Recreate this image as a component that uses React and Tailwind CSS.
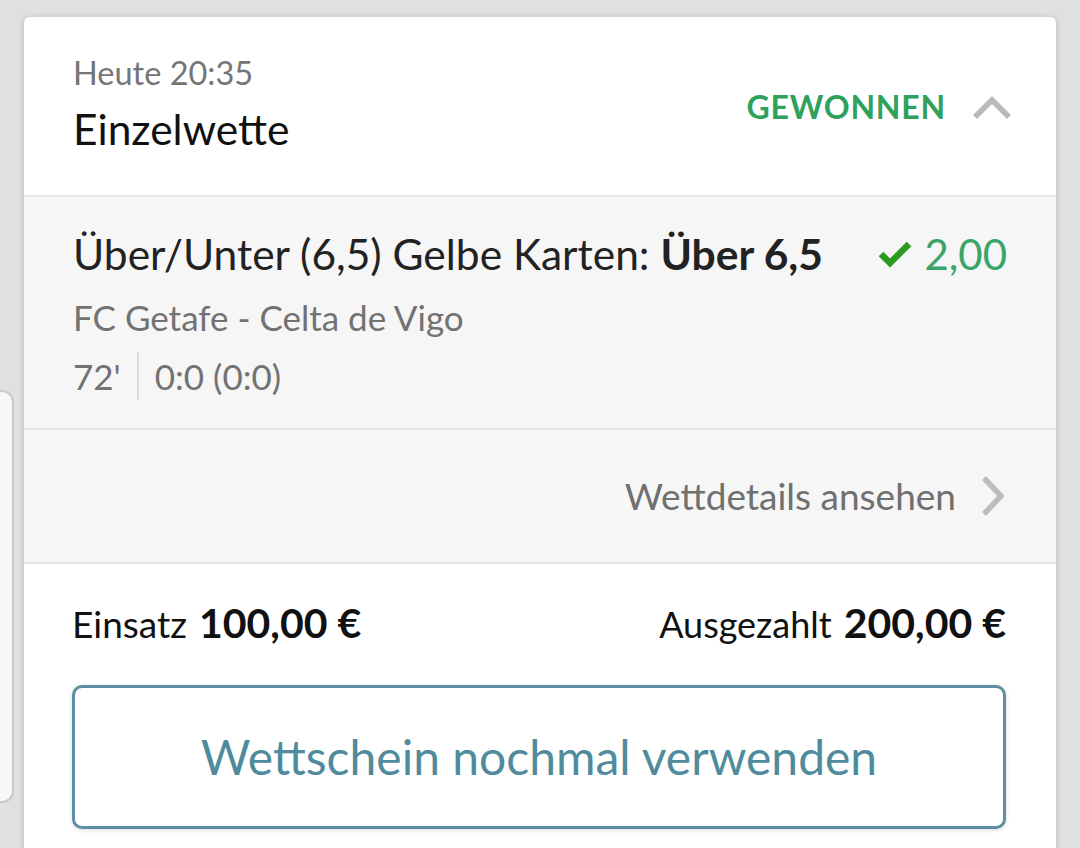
import React from "react";

const ChevronUp = () => (
  <svg width="40" height="26" viewBox="0 0 40 26" fill="none">
    <path d="M3 23 L20 6 L37 23" stroke="#b9b9b9" strokeWidth="5.5" />
  </svg>
);

const ChevronRight = () => (
  <svg width="26" height="42" viewBox="0 0 26 42" fill="none">
    <path d="M4 3 L21 21 L4 39" stroke="#bdbdbd" strokeWidth="5.5" />
  </svg>
);

const Check = () => (
  <svg width="34" height="28" viewBox="0 0 34 28" fill="none">
    <path d="M3 14 L12 23 L31 4" stroke="#2c9a1f" strokeWidth="6.5" />
  </svg>
);

const App = () => {
  return (
    <div
      className="h-[848px] w-[1080px] overflow-hidden bg-[#dfe0e2] flex items-start"
      style={{ fontFamily: "Lato, 'Noto Sans', sans-serif" }}
    >
      {/* peeking previous card */}
      <div className="mt-[390px] h-[413px] w-[14px] shrink-0 rounded-r-[12px] border-2 border-l-0 border-[#c9c9c9] bg-[#f7f7f7]"></div>

      <div className="ml-[10px] mt-[17px] w-[1032px] shrink-0 rounded-[6px] bg-white shadow-[0_1px_6px_rgba(0,0,0,0.18)]">
        {/* header */}
        <div className="flex items-center justify-between border-b-2 border-[#e8e8e8] pl-[49px] pr-[44px] pt-[36px] pb-[40px]">
          <div>
            <div className="text-[32.5px] leading-[40px] text-[#757575]">Heute 20:35</div>
            <div className="mt-[10px] text-[42.5px] leading-[52px] text-[#111]">Einzelwette</div>
          </div>
          <div className="flex items-center gap-[26px] pt-[6px]">
            <span className="text-[32px] font-bold tracking-[0.025em] text-[#2ea25d]">GEWONNEN</span>
            <ChevronUp />
          </div>
        </div>

        {/* selection */}
        <div className="border-b-2 border-[#e6e6e6] bg-[#f6f6f6] pl-[49px] pr-[49px] pt-[31px] pb-[28px]">
          <div className="flex items-center justify-between">
            <div className="text-[42.5px] leading-[52px] text-[#222]">
              Über/Unter (6,5) Gelbe Karten: <span className="font-bold">Über 6,5</span>
            </div>
            <div className="flex items-center gap-[12px]">
              <Check />
              <span className="text-[42px] leading-[52px] text-[#3ba468]">2,00</span>
            </div>
          </div>
          <div className="mt-[15px] text-[35px] leading-[44px] text-[#727272]">FC Getafe - Celta de Vigo</div>
          <div className="mt-[13px] flex items-center text-[35px] leading-[44px] text-[#727272]">
            <span>72'</span>
            <div className="mx-[16px] h-[48px] w-[2px] bg-[#dcdcdc]"></div>
            <span>0:0 (0:0)</span>
          </div>
        </div>

        {/* details link */}
        <div className="flex h-[134px] items-center justify-end gap-[24px] border-b-2 border-[#e6e6e6] bg-[#f6f6f6] pr-[50px]">
          <span className="text-[37px] text-[#707070]">Wettdetails ansehen</span>
          <ChevronRight />
        </div>

        {/* footer */}
        <div className="pl-[48px] pr-[50px] pt-[32px] pb-[40px]">
          <div className="flex items-baseline justify-between">
            <div className="flex items-baseline gap-[12px]">
              <span className="text-[37px] text-[#111]">Einsatz</span>
              <span className="text-[41px] leading-[52px] font-bold text-[#111]">100,00 €</span>
            </div>
            <div className="flex items-baseline gap-[12px]">
              <span className="text-[36px] text-[#111]">Ausgezahlt</span>
              <span className="text-[41px] leading-[52px] font-bold text-[#111]">200,00 €</span>
            </div>
          </div>
          <button className="mt-[33px] flex h-[144px] w-full items-center justify-center rounded-[10px] border-[3px] border-[#5d8fa1] bg-white text-[48px] text-[#4f8b9d] shadow-[0_1px_4px_rgba(0,0,0,0.15)]">
            Wettschein nochmal verwenden
          </button>
        </div>
      </div>
    </div>
  );
};

export default App;
